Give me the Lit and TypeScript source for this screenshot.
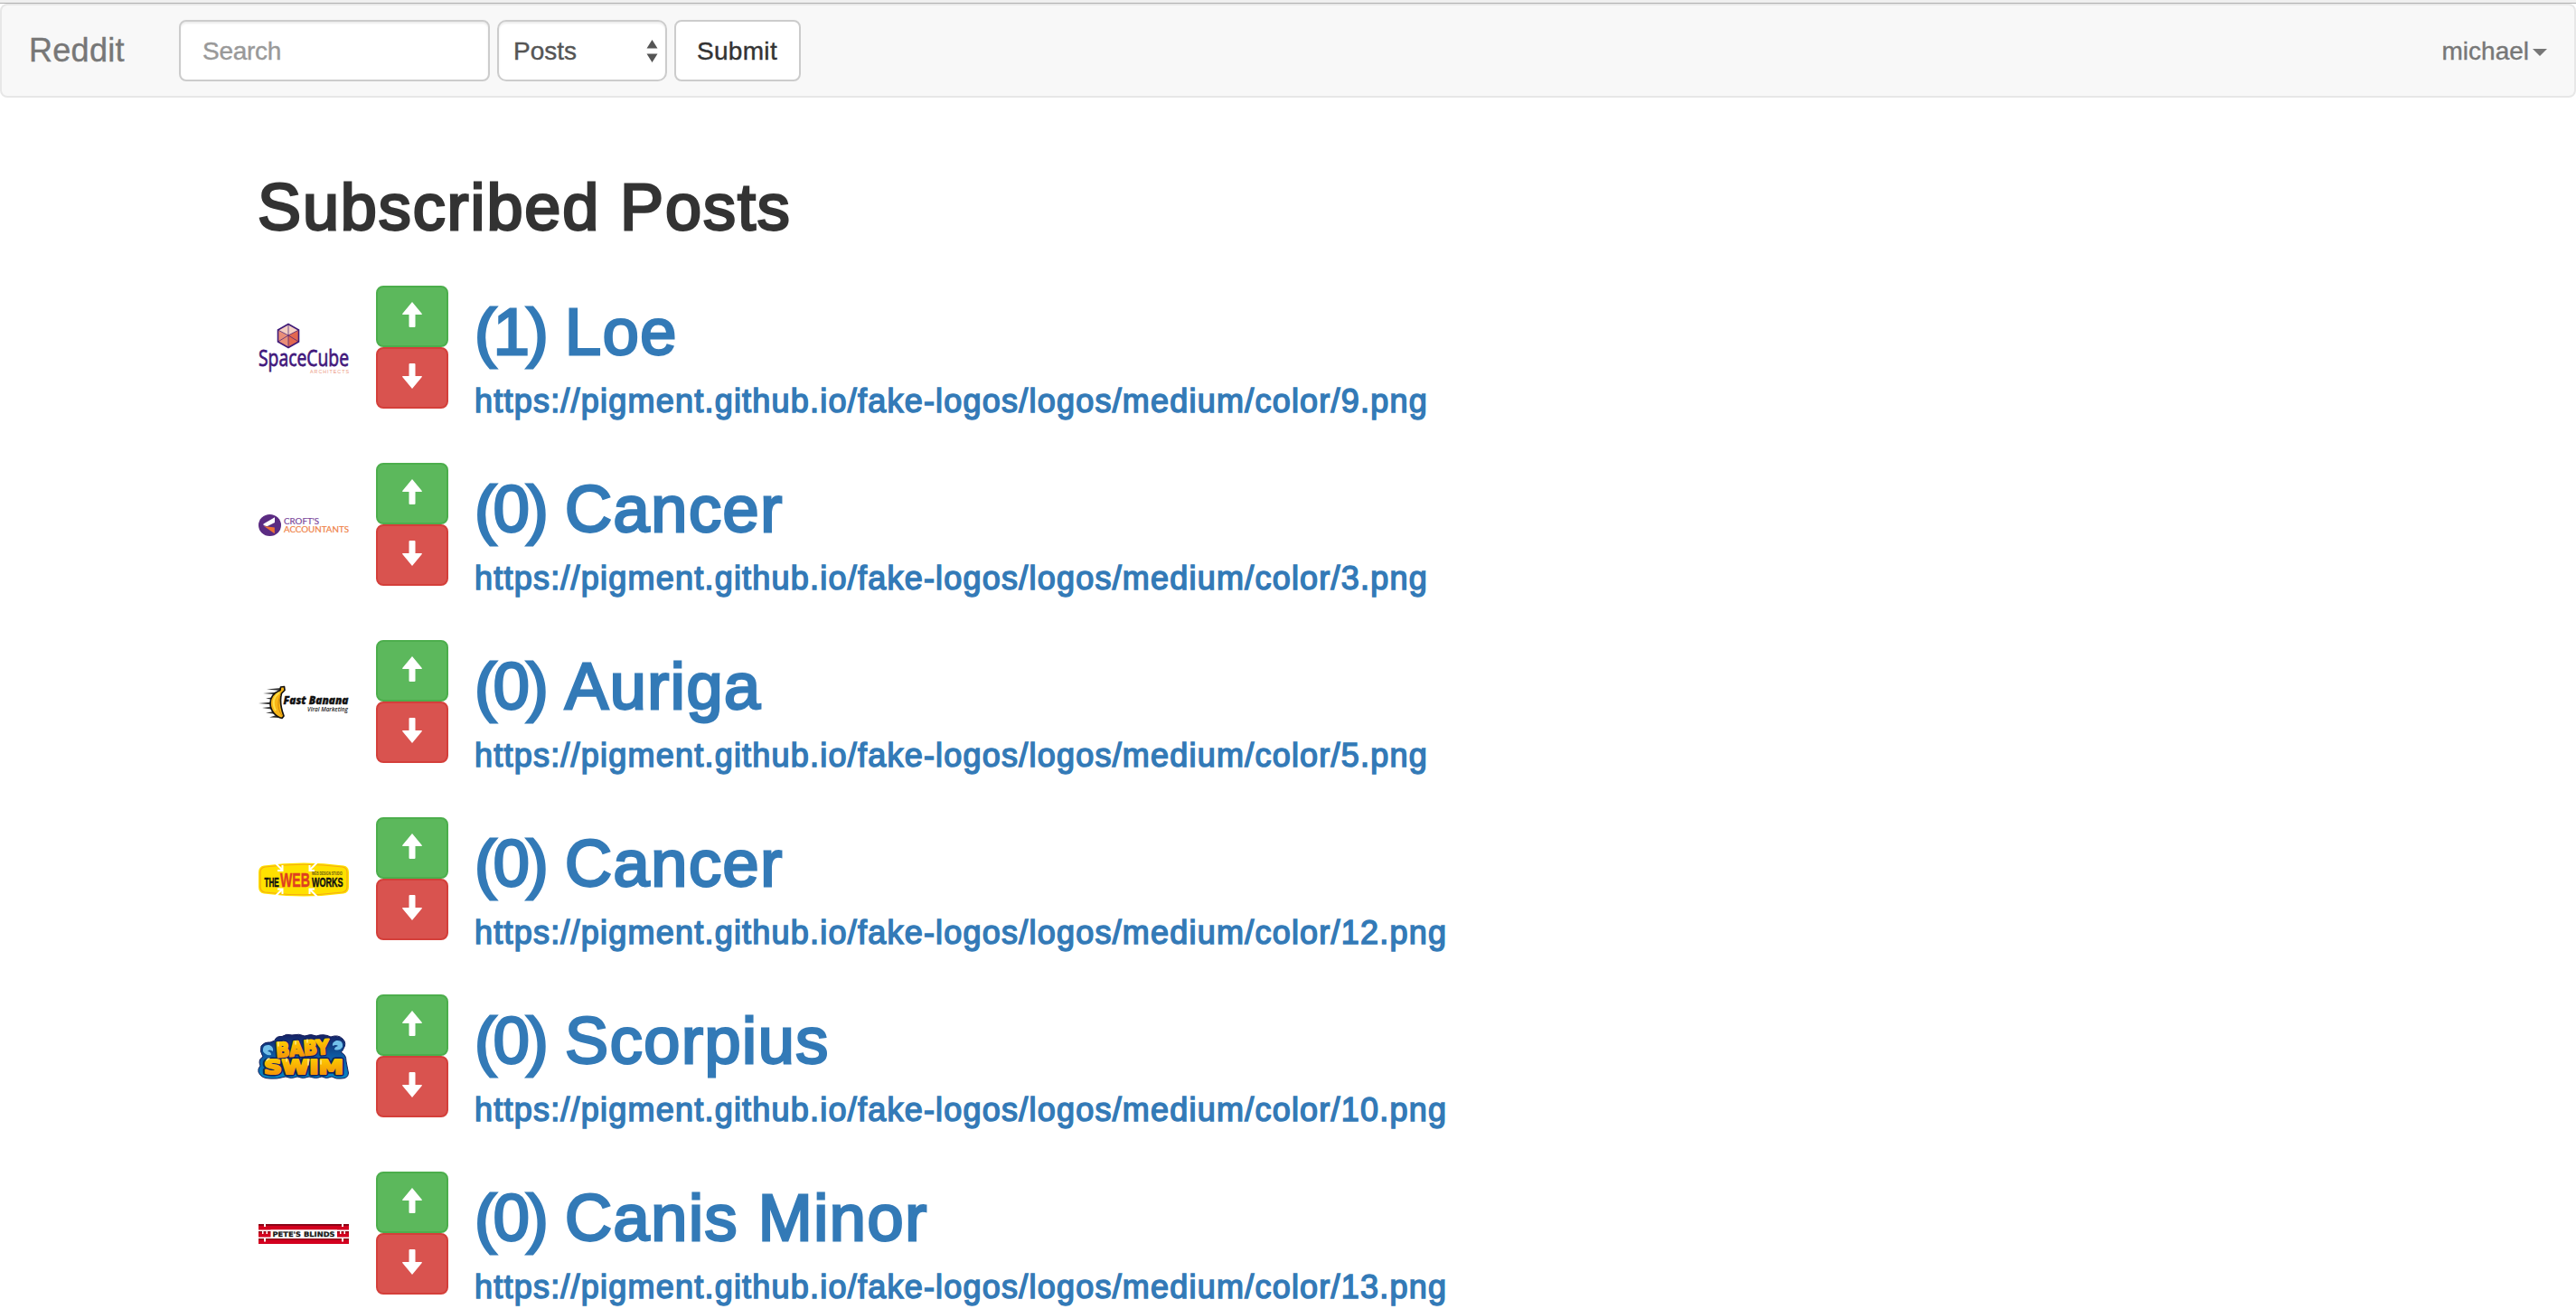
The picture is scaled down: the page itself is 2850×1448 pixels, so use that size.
import { LitElement, html, svg, css } from "lit";
import { customElement, property } from "lit/decorators.js";

interface Post {
  score: number;
  name: string;
  file: number;
}

const POSTS: Post[] = [
  { score: 1, name: "Loe", file: 9 },
  { score: 0, name: "Cancer", file: 3 },
  { score: 0, name: "Auriga", file: 5 },
  { score: 0, name: "Cancer", file: 12 },
  { score: 0, name: "Scorpius", file: 10 },
  { score: 0, name: "Canis Minor", file: 13 },
];

const spaceCube = html`<svg width="100" height="56" viewBox="0 0 100 56">
  <path d="M33 1.5 44.5 8V21L33 27.5 21.5 21V8Z" fill="#e98e78" />
  <path d="M33 1.5 44.5 8 33 14 21.5 8Z" fill="#f5cfc1" />
  <path d="M33 14 44.5 8V21L33 27.5Z" fill="#e2674f" />
  <path d="M33 1.5 44.5 8V21L33 27.5 21.5 21V8Z" fill="none" stroke="#3f1a78" stroke-width="1.6" />
  <path d="M21.5 8 33 14 44.5 8M33 14V27.5M33 2V14M33 14 21.5 21M33 14 44.5 21" fill="none" stroke="#3f1a78" stroke-width=".7" />
  <text x="0" y="48" font-family="Open Sans" font-size="26" fill="#42187c" stroke="#42187c" stroke-width=".8" textLength="100" lengthAdjust="spacingAndGlyphs">SpaceCube</text>
  <text x="57" y="55.5" font-family="Liberation Sans" font-size="5.4" fill="#ec9a84" textLength="43">ARCHITECTS</text>
</svg>`;

const crofts = html`<svg width="100" height="24" viewBox="0 0 100 24">
  <ellipse cx="12.5" cy="12" rx="12.5" ry="12" fill="#5b2b82" />
  <path d="M5.5 10.5 18 3.2V9L9.5 13.2 5.5 12Z" fill="#fff" />
  <path d="M6 13 17.8 14.5V21.2Z" fill="#ed7235" />
  <text x="28" y="11" font-family="Lato" font-size="9.6" fill="#7d4a9c" stroke="#7d4a9c" stroke-width=".2" textLength="39" lengthAdjust="spacingAndGlyphs">CROFT'S</text>
  <text x="28" y="19.7" font-family="Lato" font-size="9.6" fill="#ef8248" stroke="#ef8248" stroke-width=".2" textLength="72" lengthAdjust="spacingAndGlyphs">ACCOUNTANTS</text>
</svg>`;

const banana = html`<svg width="100" height="36" viewBox="0 0 100 36">
  <path d="M9 3.5 25 2V5ZM5 8 22 6.5V9.5ZM8 13.5 18 12V15.500ZM0 19 16 17.500V20.500ZM4 24 17 22.500V26ZM8 29.500 20 27.500V31ZM12 34.500 23 31V35Z" fill="#333" />
  <path d="M24.500 1 28.500 0.500 29 4.500 25.500 8C23 17 25 25 28 33L26 35.500C19 34 13 27 13 19 13 12 18 7 24 4.500Z" fill="#f8b617" stroke="#151210" stroke-width="1.7" stroke-linejoin="round" />
  <path d="M23 7C16.500 12 15 19 19 27" fill="none" stroke="#ffe047" stroke-width="2" />
  <path d="M24 10C20.500 19 21.500 27 26.500 33" fill="none" stroke="#d78908" stroke-width="1" />
  <text x="27.500" y="19.700" font-family="Open Sans" font-weight="800" font-style="italic" font-size="12.800" fill="#111" stroke="#111" stroke-width=".4" textLength="72" lengthAdjust="spacingAndGlyphs">Fast Banana</text>
  <text x="54" y="27.800" font-family="Open Sans" font-weight="600" font-style="italic" font-size="6.600" fill="#222" textLength="45" lengthAdjust="spacingAndGlyphs">Viral Marketing</text>
</svg>`;

const webWorks = html`<svg width="100" height="38" viewBox="0 0 100 38">
  <path d="M6 3.500Q50-2.500 94 3.500 100 4.500 100 11V27Q100 33.500 94 34.500 50 40.500 6 34.500 0 33.500 0 27V11Q0 4.500 6 3.500Z" fill="#ffe100" />
  <path d="M7 5Q50-.500 93 5 98 6 98 11V27Q98 32 93 33 50 38.500 7 33 2 32 2 27V11Q2 6 7 5Z" fill="none" stroke="#f5ad12" stroke-width="1.200" />
  <path d="M18 0 26 8M21 9H26.500V3M65 0 57 8M62 9H56.500V3M18 38 26 30M21 29.500H26.500V35M65 38 57 30M62 29.500H56.500V35" fill="none" stroke="#fff" stroke-width="2" />
  <g font-family="Liberation Sans" font-weight="700">
    <text transform="translate(6.500 27) scale(.58 1)" font-size="14" fill="#111" stroke="#111" stroke-width=".5">THE</text>
    <text transform="translate(24 27) scale(.64 1)" font-size="22" fill="#df3f20" stroke="#df3f20" stroke-width=".5">WEB</text>
    <text transform="translate(59 27) scale(.62 1)" font-size="14.500" fill="#111" stroke="#111" stroke-width=".5">WORKS</text>
    <text transform="translate(59 13.600) scale(.7 1)" font-size="4.600" fill="#5f5510">WEB DESIGN STUDIO</text>
  </g>
</svg>`;

// Outlined twice: a wide blue halo first, then the orange lettering over it.
const swimText = (fill: string, stroke: string, w: number) => svg`
  <g fill=${fill} stroke=${stroke} stroke-width=${w} stroke-linejoin="round" font-family="DejaVu Sans" font-weight="700">
    <text x="19" y="23.500" font-size="22" textLength="59" lengthAdjust="spacingAndGlyphs" transform="rotate(-4 48 15)">BABY</text>
    <text x="6" y="43.500" font-size="22" textLength="88" lengthAdjust="spacingAndGlyphs">SWIM</text>
  </g>`;

const babySwim = html`<svg width="100" height="50" viewBox="0 0 100 50">
  <defs>
    <linearGradient id="halo" x1="0" y1="0" x2="0" y2="1"><stop offset="0" stop-color="#152063" /><stop offset=".5" stop-color="#0d5ba3" /><stop offset="1" stop-color="#0787c5" /></linearGradient>
    <linearGradient id="gold" x1="0" y1="0" x2="0" y2="1"><stop offset="0" stop-color="#ffd400" /><stop offset="1" stop-color="#f38a08" /></linearGradient>
  </defs>
  <path d="M18 7Q19 2 26 2.500 31-1 37 1 45-1 51 2 58-1 64 2 72-1 80 3 88 0 93 5 98 10 94 16 93 19 91 20 97 22 97 30L99.500 43Q99 49 92 49 86 50 81 47 75 50 70 47 64 50 56 47 49 50 43 47 36 50 30 47 20 50 12 49 3 49 0 42-1 38 2 35-1 28 5 25 1 19 3 13 7 8 13 9Z" fill="url(#halo)" stroke="#151f5e" stroke-width="1" />
  <path d="M5 19Q4 11 12 12 17 14 16 19 12 16 10 19 14 19 14 23 8 24 5 19ZM93 14Q94 6 86 7 81 9 82 13 86 11 88 13 84 14 84 17 90 19 93 14Z" fill="#72c0ea" />
  ${swimText("#10205f", "#10205f", 5)}
  ${swimText("url(#gold)", "url(#gold)", 2.2)}
  <path d="M22 9V13M41 8V11M54 6V9M9 29Q10 27 12 27M31 27V30M55 28V34M69 29V33" stroke="#fff2a0" stroke-width="1.300" stroke-linecap="round" fill="none" />
</svg>`;

const petes = html`<svg width="100" height="22" viewBox="0 0 100 22">
  <path d="M0 0H100V6.500H0ZM0 8H100V14.500H0ZM0 16H100V22H0Z" fill="#d3001f" />
  <path d="M0 0H100V2H0ZM0 8H100V9.500H0ZM0 16H100V17.500H0Z" fill="#8c0618" />
  <path d="M6 0H8V3H6ZM92 0H94V3H92ZM4 8H5.500V11H4ZM8.500 8H10V11H8.500ZM90 8H91.500V11H90ZM94.500 8H96V11H94.500ZM6 16H8V19.500H6ZM92 16H94V19.500H92Z" fill="#fff" />
  <path d="M13.500 6.500H87V16H13.500Z" fill="#fff" />
  <text x="15.500" y="13.900" font-family="DejaVu Sans" font-weight="700" font-size="7.600" fill="#161616" stroke="#161616" stroke-width=".25" textLength="69" lengthAdjust="spacingAndGlyphs">PETE'S BLINDS</text>
</svg>`;

const LOGOS: Record<number, unknown> = {
  9: spaceCube,
  3: crofts,
  5: banana,
  12: webWorks,
  10: babySwim,
  13: petes,
};

@customElement("post-row")
class PostRow extends LitElement {
  @property({ attribute: false }) post!: Post;

  static styles = css`
    :host { display: flex; height: 196px; }
    .logo { width: 100px; height: 138px; margin-right: 30px; display: flex; align-items: center; }
    .logo svg { display: block; overflow: visible; }
    .votes { width: 80px; margin-right: 29px; display: flex; flex-direction: column; }
    button {
      width: 80px; height: 68px; padding: 0; border-radius: 8px;
      display: flex; align-items: center; justify-content: center;
    }
    .up { background: #5cb85c; border: 2px solid #4cae4c; }
    .down { background: #d9534f; border: 2px solid #d43f3a; }
    .up svg { margin-top: -4px; }
    .down svg { margin-top: -4px; }
    .body { padding-top: 12px; white-space: nowrap; color: #337ab7; }
    h1, h4 { margin: 0; font-weight: 400; }
    h1 { font-size: 72px; line-height: 79px; -webkit-text-stroke: 2.8px #337ab7; display: flex; }
    .score { letter-spacing: -3.2px; word-spacing: 4.8px; white-space: pre; }
    .name { letter-spacing: 1.6px; }
    h4 { margin-top: 17px; font-size: 36px; line-height: 40px; letter-spacing: 1.22px; -webkit-text-stroke: 1.5px #337ab7; }
    a { color: inherit; text-decoration: none; }
  `;

  render() {
    const { score, name, file } = this.post;
    return html`
      <div class="logo">${LOGOS[file]}</div>
      <div class="votes">
        <button class="up" aria-label="Up">
          <svg width="22" height="28" viewBox="0 0 22 28"><path d="M11 0 22 13.200Q22 14 21 14H14.500V27Q14.500 28 13.500 28H8.500Q7.500 28 7.500 27V14H1Q0 14 0 13.200Z" fill="#fff" /></svg>
        </button>
        <button class="down" aria-label="Down">
          <svg width="22" height="28" viewBox="0 0 22 28"><path d="M11 28 22 14.800Q22 14 21 14H14.500V1Q14.500 0 13.500 0H8.500Q7.500 0 7.500 1V14H1Q0 14 0 14.800Z" fill="#fff" /></svg>
        </button>
      </div>
      <div class="body">
        <h1><span class="score">(${score}) </span><span class="name">${name}</span></h1>
        <h4><a href="#">https://pigment.github.io/fake-logos/logos/medium/color/${file}.png</a></h4>
      </div>
    `;
  }
}

@customElement("app-root")
class AppRoot extends LitElement {
  static styles = css`
    :host {
      display: block; height: 1448px; overflow: hidden; background: #fff; color: #333;
      font-family: "Liberation Sans", Arial, sans-serif;
    }
    .edge { height: 3px; background: #f0f0f0; border-bottom: 1px solid #b0b0b0; }
    nav {
      box-sizing: border-box; height: 104px; display: flex; align-items: center;
      padding: 0 30px; background: #f8f8f8; border: 2px solid #e7e7e7; border-radius: 8px;
      -webkit-text-stroke-width: 0.4px;
    }
    .brand { width: 166px; font-size: 36px; letter-spacing: 0.3px; color: #777; }
    .search, .kind, .submit {
      box-sizing: border-box; height: 68px; margin: 0 8px 0 0; background: #fff;
      border: 2px solid #ccc; border-radius: 8px; font: 28px "Liberation Sans", Arial, sans-serif;
      -webkit-text-stroke-width: 0.4px;
    }
    .search { width: 344px; padding: 1px 24px 0; letter-spacing: -0.3px; box-shadow: inset 0 2px 2px rgba(0, 0, 0, 0.075); }
    .search::placeholder { color: #999; opacity: 1; }
    .kind {
      width: 188px; display: flex; align-items: center; justify-content: space-between;
      padding: 0 8px 0 16px; border-radius: 10px; color: #555;
      box-shadow: inset 0 2px 2px rgba(0, 0, 0, 0.075);
    }
    .kind span { padding-top: 1px; }
    .submit { width: 140px; padding: 1px 0 0; color: #333; letter-spacing: 0.3px; text-indent: -1px; }
    .user { margin-left: auto; padding-top: 1px; display: flex; align-items: center; font-size: 28px; color: #777; }
    .user svg { margin: 3px 0 0 4px; }
    h1 {
      margin: 82px 0 47px; padding-left: 285px; font-size: 72px; line-height: 79px; font-weight: 400;
      letter-spacing: 1.9px; -webkit-text-stroke: 2.8px #333;
    }
    main { padding-left: 286px; }
  `;

  render() {
    return html`
      <div class="edge"></div>
      <nav>
        <span class="brand">Reddit</span>
        <input class="search" placeholder="Search" />
        <div class="kind">
          <span>Posts</span>
          <svg width="13" height="25" viewBox="0 0 13 25"><path d="M6.500 0 12.500 9.500H.500ZM.500 15.500H12.500L6.500 25Z" fill="#555" /></svg>
        </div>
        <button class="submit">Submit</button>
        <span class="user">michael<svg width="16" height="8" viewBox="0 0 16 8"><path d="M0 0H16L8 8Z" fill="#777" /></svg></span>
      </nav>
      <h1>Subscribed Posts</h1>
      <main>${POSTS.map((post) => html`<post-row .post=${post}></post-row>`)}</main>
    `;
  }
}
